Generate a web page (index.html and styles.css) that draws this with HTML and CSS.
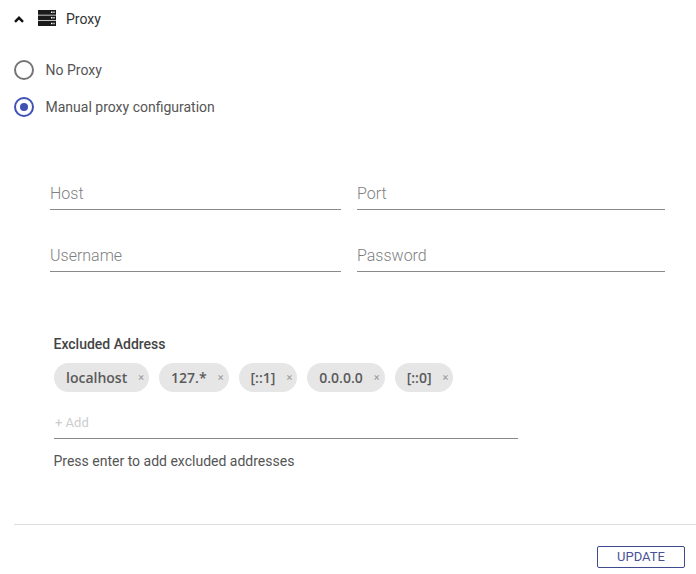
FILE: index.html
```html
<!DOCTYPE html>
<html lang="en">
<head>
    <meta charset="UTF-8">
    <title>Proxy</title>
    <link rel="stylesheet" href="styles.css">
</head>
<body>
    <div class="panel-header">
        <svg class="chevron" width="10" height="7" viewBox="0 0 10 7"><path d="M1 5.8 L5 1.8 L9 5.8" fill="none" stroke="#111" stroke-width="2.4"/></svg>
        <svg class="server-icon" width="18" height="16" viewBox="0 0 18 16">
            <path fill="#1a1a1a" d="M0 0h18v4.8H0zM0 5.4h18v4.8H0zM0 10.9h18V16H0z"/>
            <path fill="#fff" d="M13 1.6h1.5v1.5H13zM15.4 1.6h1.2v1.5h-1.2zM13 7.1h1.5v1.5H13zM15.4 7.1h1.2v1.5h-1.2zM13 12.8h1.5v1.5H13zM15.4 12.8h1.2v1.5h-1.2z"/>
        </svg>
        <span class="panel-title">Proxy</span>
    </div>

    <div class="radio-group">
        <div class="radio-row">
            <span class="radio"></span>
            <span class="radio-label">No Proxy</span>
        </div>
        <div class="radio-row">
            <span class="radio checked"><span class="radio-dot"></span></span>
            <span class="radio-label">Manual proxy configuration</span>
        </div>
    </div>

    <div class="field-grid">
        <div class="field">Host</div>
        <div class="field">Port</div>
        <div class="field">Username</div>
        <div class="field">Password</div>
    </div>

    <div class="excluded">
        <div class="excluded-title">Excluded Address</div>
        <div class="chips">
            <span class="chip">localhost<span class="chip-x">×</span></span>
            <span class="chip">127.*<span class="chip-x">×</span></span>
            <span class="chip">[::1]<span class="chip-x">×</span></span>
            <span class="chip">0.0.0.0<span class="chip-x">×</span></span>
            <span class="chip">[::0]<span class="chip-x">×</span></span>
        </div>
        <div class="add-input">+ Add</div>
        <div class="hint">Press enter to add excluded addresses</div>
    </div>

    <div class="footer">
        <button class="update-btn">UPDATE</button>
    </div>
</body>
</html>
```

FILE: styles.css
```css
body {
    margin: 0;
    height: 574px;
    overflow: hidden;
    background: #fff;
    font-family: Roboto, sans-serif;
    color: #444;
}
.panel-header {
    display: flex;
    align-items: center;
    height: 20px;
    margin-top: 9px;
    padding-left: 14px;
}
.chevron {
    margin-right: 14px;
}
.server-icon {
    margin-right: 10px;
    margin-bottom: 2px;
}
.panel-title {
    font-size: 14px;
    color: #333;
}
.radio-group {
    margin-top: 31px;
    padding-left: 14px;
}
.radio-row {
    display: flex;
    align-items: center;
    height: 20px;
    margin-bottom: 17px;
}
.radio {
    display: flex;
    align-items: center;
    justify-content: center;
    box-sizing: border-box;
    width: 20px;
    height: 20px;
    margin-right: 11.5px;
    border: 2px solid #757575;
    border-radius: 50%;
}
.radio.checked {
    border-color: #3f51b5;
}
.radio-dot {
    width: 8px;
    height: 8px;
    border-radius: 50%;
    background: #3f51b5;
}
.radio-label {
    font-size: 14px;
    color: #555;
}
.field-grid {
    display: grid;
    grid-template-columns: 291px 308px;
    column-gap: 16px;
    row-gap: 29px;
    margin-top: 60px;
    padding-left: 50px;
}
.field {
    box-sizing: border-box;
    height: 33px;
    padding-top: 7px;
    border-bottom: 1px solid #8a8a8a;
    font-size: 16px;
    font-weight: 300;
    color: #808080;
}
.excluded {
    margin-top: 64px;
    padding-left: 54px;
}
.excluded-title {
    margin-left: -0.5px;
    font-size: 14px;
    font-weight: 500;
    color: #444;
}
.chips {
    display: flex;
    gap: 10px;
    margin-top: 11px;
}
.chip {
    display: flex;
    align-items: center;
    height: 29px;
    padding: 0 5px 0 12px;
    border-radius: 15px;
    background: #e6e6e6;
    font-family: "Open Sans", sans-serif;
    font-size: 14px;
    font-weight: 600;
    color: #5a5a5a;
}
.chip-x {
    margin-left: 11px;
    font-family: Roboto, sans-serif;
    font-size: 11px;
    font-weight: 400;
    color: #999;
}
.add-input {
    box-sizing: border-box;
    width: 464px;
    height: 34px;
    margin-top: 13px;
    padding: 10px 0 0 1px;
    border-bottom: 1px solid #8a8a8a;
    font-size: 13px;
    color: #ccc;
}
.hint {
    margin-top: 14px;
    margin-left: -0.5px;
    font-size: 14px;
    color: #555;
}
.footer {
    display: flex;
    justify-content: flex-end;
    margin: 55px 0 0 14px;
    padding: 21px 11px 0 0;
    border-top: 1px solid #ddd;
}
.update-btn {
    box-sizing: border-box;
    width: 88px;
    height: 22px;
    padding: 0 0 1px;
    border: 1px solid #3f4a8f;
    border-radius: 2px;
    background: #fff;
    font-family: Roboto, sans-serif;
    font-size: 13px;
    color: #4a5296;
}
```
